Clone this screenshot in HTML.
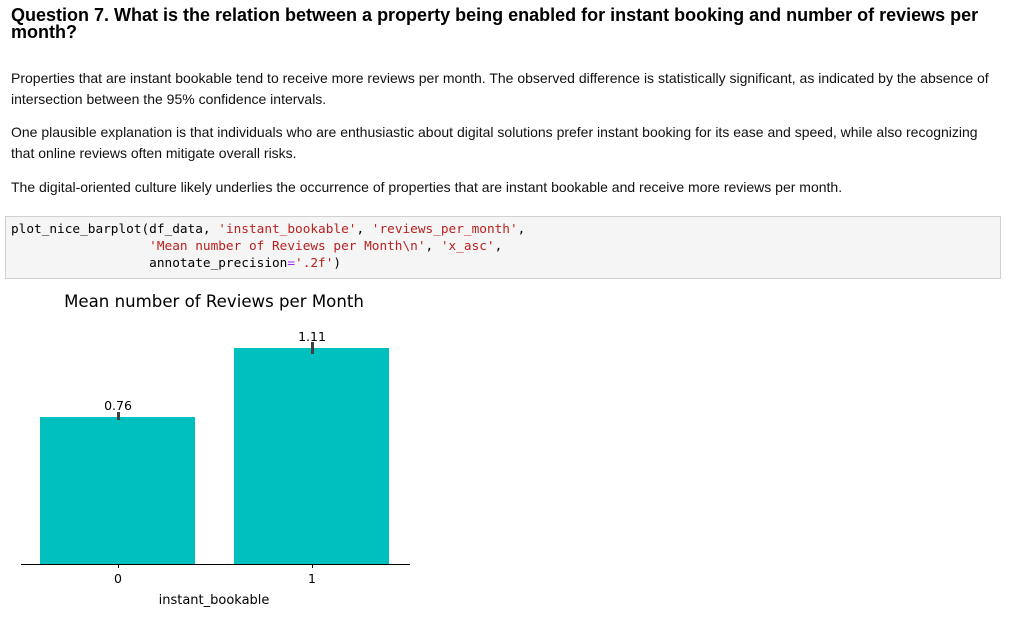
<!DOCTYPE html>
<html><head><meta charset="utf-8"><style>
body{margin:0;width:1012px;height:618px;background:#fff;font-family:"Liberation Sans",Arial,sans-serif;color:#000;position:relative;overflow:hidden}
h2{position:absolute;left:11px;top:7px;margin:0;font-size:18px;line-height:17px;font-weight:bold;width:985px}
p{position:absolute;left:11px;margin:0;font-size:14px;line-height:21px;width:990px;color:#111}
.code{position:absolute;left:5px;top:216px;width:996px;height:63px;background:#f5f5f5;border:1px solid #d0d0d0;box-sizing:border-box}
pre{position:absolute;left:11px;top:221px;margin:0;font-family:"DejaVu Sans Mono","Liberation Mono",monospace;font-size:12.75px;line-height:17px;color:#000}
.s{color:#ba2121}.o{color:#aa22ff}
</style></head><body>
<h2>Question 7. What is the relation between a property being enabled for instant booking and number of reviews per month?</h2>
<p style="top:68px">Properties that are instant bookable tend to receive more reviews per month. The observed difference is statistically significant, as indicated by the absence of intersection between the 95% confidence intervals.</p>
<p style="top:122px">One plausible explanation is that individuals who are enthusiastic about digital solutions prefer instant booking for its ease and speed, while also recognizing that online reviews often mitigate overall risks.</p>
<p style="top:177px">The digital-oriented culture likely underlies the occurrence of properties that are instant bookable and receive more reviews per month.</p>
<div class="code"></div>
<pre>plot_nice_barplot(df_data, <span class="s">'instant_bookable'</span>, <span class="s">'reviews_per_month'</span>,
                  <span class="s">'Mean number of Reviews per Month\n'</span>, <span class="s">'x_asc'</span>,
                  annotate_precision<span class="o">=</span><span class="s">'.2f'</span>)</pre>
<svg style="position:absolute;left:0;top:0" width="1012" height="618">
<g font-family="DejaVu Sans, sans-serif" fill="#000">
<text x="214" y="307" font-size="16.6" text-anchor="middle">Mean number of Reviews per Month</text>
<rect x="40" y="417" width="155" height="147" fill="#00bfbf"/>
<rect x="234" y="348" width="155" height="216" fill="#00bfbf"/>
<rect x="117" y="412" width="3" height="8" fill="#404040"/>
<rect x="311" y="342" width="3" height="12" fill="#404040"/>
<text x="118" y="410" font-size="12.5" text-anchor="middle">0.76</text>
<text x="312" y="341" font-size="12.5" text-anchor="middle">1.11</text>
<line x1="21" y1="564.5" x2="410" y2="564.5" stroke="#000" stroke-width="1"/>
<line x1="118.5" y1="564" x2="118.5" y2="568" stroke="#000"/>
<line x1="312.5" y1="564" x2="312.5" y2="568" stroke="#000"/>
<text x="118" y="583" font-size="12.5" text-anchor="middle">0</text>
<text x="312" y="583" font-size="12.5" text-anchor="middle">1</text>
<text x="214" y="604" font-size="13" text-anchor="middle">instant_bookable</text>
</g></svg>
</body></html>
